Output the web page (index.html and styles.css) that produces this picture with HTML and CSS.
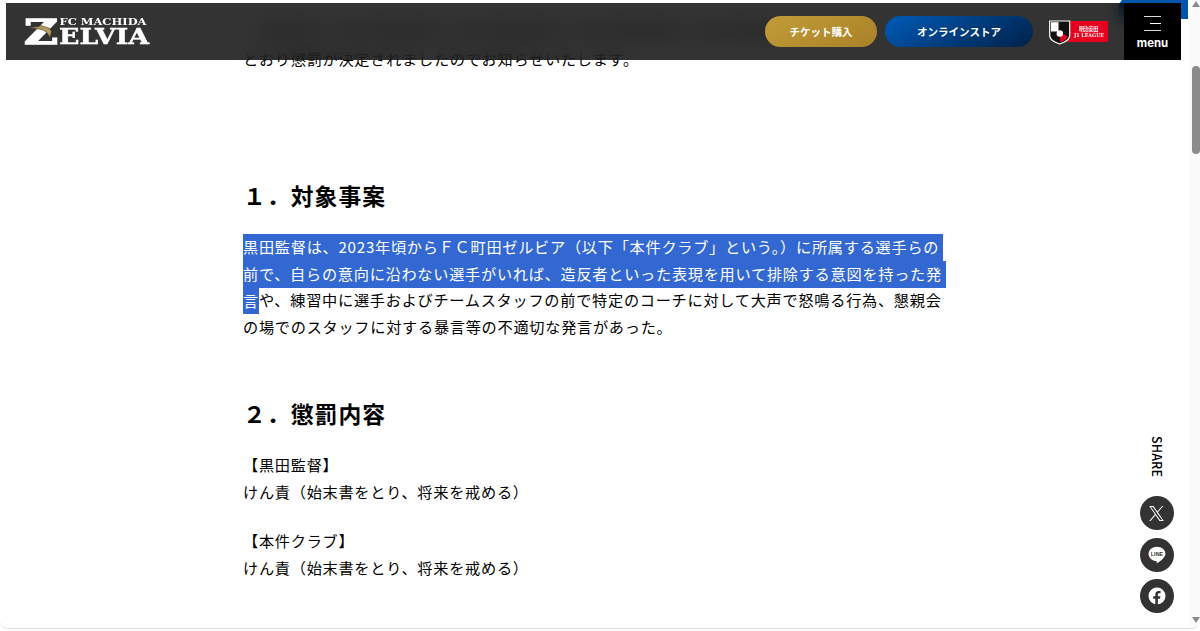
FILE: index.html
```html
<!DOCTYPE html>
<html lang="ja">
<head>
<meta charset="UTF-8">
<meta name="viewport" content="width=device-width, initial-scale=1.0">
<title>FC MACHIDA ZELVIA</title>
<link rel="stylesheet" href="styles.css">
</head>
<body>

<div class="page">

    <div class="corner-banner"></div>

    <main class="article">
        <p class="lead"><span class="lead-above"></span>とおり懲罰が決定されましたのでお知らせいたします。</p>

        <h2>１．対象事案</h2>
        <p><mark class="to-end">黒田監督は、2023年頃からＦＣ町田ゼルビア（以下「本件クラブ」という。）に所属する選手らの</mark><br><mark class="to-end">前で、自らの意向に沿わない選手がいれば、造反者といった表現を用いて排除する意図を持った発</mark><br><mark>言</mark>や、練習中に選手およびチームスタッフの前で特定のコーチに対して大声で怒鳴る行為、懇親会<br>の場でのスタッフに対する暴言等の不適切な発言があった。</p>

        <h2 class="second">２．懲罰内容</h2>
        <p>【黒田監督】<br>けん責（始末書をとり、将来を戒める）</p>
        <p class="spaced">【本件クラブ】<br>けん責（始末書をとり、将来を戒める）</p>
    </main>

    <header class="header">
        <a class="logo" href="#">
            <svg width="128" height="40" viewBox="0 -4 128 40" fill="#fff">
                <g font-family="'DejaVu Serif', serif" font-weight="bold" stroke="#fff">
                    <text x="0" y="28.500" font-size="34" textLength="34" lengthAdjust="spacingAndGlyphs" stroke-width="1.400">Z</text>
                    <text x="35.500" y="10" font-size="9.600" textLength="87" lengthAdjust="spacingAndGlyphs" stroke-width="0">FC MACHIDA</text>
                    <text x="35" y="28.500" font-size="22" textLength="90" lengthAdjust="spacingAndGlyphs" stroke-width=".5">ELVIA</text>
                </g>
                <path d="M4 12.500l10-.8 3-1.200 3.500 1 5 1.700 2 3.200-1.500 6.200-2.800-4.700-4-3-5-1z" fill="#b39a5b" stroke="#333" stroke-width=".5"/>
            </svg>
        </a>
        <nav class="nav">
            <a class="btn ticket" href="#">チケット購入</a>
            <a class="btn store" href="#">オンラインストア</a>
            <svg class="league" width="60" height="26" viewBox="0 0 60 26">
                <path d="M14 2h45v21H14z" fill="#e60020"/>
                <path d="M.7 2h20v14.500c0 4.500-5 6.500-10 8.500-5-2-10-4-10-8.500z" fill="#111" stroke="#fff" stroke-width="1.200"/>
                <path d="M2 3.200h7.500v9.300H2z" fill="#fff"/>
                <path d="M11 13l7.500 4.500c-1 3-4.500 4.500-7.500 5.700z" fill="#e60020"/>
                <circle cx="10.800" cy="14.500" r="3.200" fill="#fff"/>
                <text x="30" y="11.500" font-size="5.200" textLength="19.500">明治安田</text>
                <text x="25" y="18.200" font-size="5" textLength="30" lengthAdjust="spacingAndGlyphs" class="league-sub">J1 LEAGUE</text>
            </svg>
        </nav>
        <button class="menu">
            <span class="menu-lines"><i></i><i></i><i></i></span>
            menu
        </button>
    </header>

    <aside class="share">
        <span class="share-label">SHARE</span>
        <a href="#">
            <svg width="15" height="15" viewBox="0 0 1200 1227" fill="#fff"><path d="M714.163 519.284L1160.890 0H1055.030L667.137 450.887L357.328 0H0L468.492 681.821L0 1226.370H105.866L515.491 750.218L842.672 1226.370H1200L714.137 519.284ZM569.165 687.828L521.697 619.934L144.011 79.694H306.615L611.412 515.685L658.880 583.579L1055.080 1150.300H892.476Z"/></svg>
        </a>
        <a href="#">
            <svg width="18" height="18" viewBox="0 0 18 18">
                <path d="M9 .8c4.700 0 8.400 3 8.400 6.900 0 3.300-4.100 6.800-8 9.300-.9.500-.8-.2-.6-1.800C4 15 .6 11.800.6 7.700.6 3.800 4.300.8 9 .8z" fill="#fff"/>
                <text x="2.800" y="9.800" font-size="5.600" textLength="12.400" lengthAdjust="spacingAndGlyphs" class="line-text">LINE</text>
            </svg>
        </a>
        <a href="#">
            <svg width="18" height="18" viewBox="0 0 18 18">
                <circle cx="9" cy="9" r="8.500" fill="#fff"/>
                <path d="M7.300 18v-6.300H5.200V9.200h2.100V7.400c0-2.300 1.300-3.500 3.300-3.500.8 0 1.600.1 1.900.2v2.100h-1.200c-1.100 0-1.400.6-1.400 1.400v1.600h2.500l-.4 2.500H9.900V18z" fill="#333"/>
            </svg>
        </a>
    </aside>
</div>

<div class="scrollbar">
    <span class="arrow up"></span>
    <span class="thumb"></span>
    <span class="arrow down"></span>
</div>

</body>
</html>
```
FILE: styles.css
```css
* {
    box-sizing: border-box;
}

body {
    position: relative;
    display: flex;
    height: 629px;
    margin: 0;
    overflow: hidden;
    background: #fff;
    border-bottom: 1px solid #ddd;
    border-radius: 0 0 8px 8px;
    color: #000;
    font-family: "Noto Sans CJK JP", sans-serif;
}

a {
    color: inherit;
    text-decoration: none;
}

.page {
    position: relative;
    flex: 1;
}

/* --- Header --- */
.header {
    position: absolute;
    top: 3px;
    left: 6px;
    right: 8px;
    display: flex;
    align-items: center;
    height: 57px;
    padding-left: 18px;
    background: rgba(0, 0, 0, 0.8);
    backdrop-filter: blur(8px);
}

.corner-banner {
    position: absolute;
    top: 0;
    right: 1px;
    width: 69px;
    height: 19px;
    background: #0055ad;
    clip-path: polygon(3px 0, 100% 0, 100% 100%, 0 100%, 0 4px);
}

.logo {
    height: 40px;
    margin-bottom: 1px;
}

.nav {
    display: flex;
    align-items: center;
    gap: 8px;
    margin-left: auto;
}

.btn {
    display: flex;
    align-items: center;
    justify-content: center;
    height: 31px;
    padding-bottom: 1px;
    border-radius: 16px;
    color: #fff;
    font-size: 10.5px;
    font-weight: bold;
}

.ticket {
    width: 112px;
    background: linear-gradient(150deg, #c29c38, #a98128);
}

.store {
    width: 148px;
    background: linear-gradient(150deg, #0055ad 10%, #00244d 95%);
}

.league {
    margin: 0 15px 0 8px;
}

.league text {
    fill: #fff;
    font-weight: bold;
}

.league-sub {
    font-family: "DejaVu Serif", serif;
}

.menu {
    display: flex;
    flex-direction: column;
    align-items: center;
    gap: 3px;
    width: 57px;
    height: 57px;
    padding: 12.5px 0 0;
    border: 0;
    background: #000;
    color: #fff;
    font: bold 11.4px/18px Inter, sans-serif;
}

.menu-lines {
    display: flex;
    flex-direction: column;
    align-items: flex-end;
    gap: 6px;
    width: 17px;
}

.menu-lines i {
    width: 17px;
    height: 1px;
    background: #ddd;
}

.menu-lines i:nth-child(2) {
    width: 11px;
    background: #fff;
}

/* --- Article --- */
.article {
    width: 720px;
    margin-left: 243px;
    padding-top: 45px;
    font-size: 15.2px;
    line-height: 26.7px;
    letter-spacing: 0.72px;
    white-space: nowrap;
}

.article p {
    margin: 0;
}

.lead {
    position: relative;
}

/* part of the previous line, seen only through the blurred header */
.lead-above {
    position: absolute;
    top: -20px;
    left: 16px;
    width: 520px;
    height: 12px;
    background: repeating-linear-gradient(90deg, #777 0 44px, #bbb 56px 80px, #999 95px 120px);
    filter: blur(6px);
    opacity: 0.5;
}

.article h2 {
    margin: 104px 0 17px;
    font-size: 22.8px;
    line-height: 40px;
    font-weight: bold;
    letter-spacing: 1.05px;
}

.article h2.second {
    margin: 54px 0 17.7px;
}

.article .spaced {
    margin-top: 22.5px;
}

mark {
    padding: 0.5px 0 3.5px;
    background: #3367d1;
    color: #fff;
}

/* selected lines run a little past the text and touch the next line */
mark.to-end {
    padding-right: 4px;
    padding-bottom: 5px;
}

/* --- Share buttons --- */
.share {
    position: absolute;
    top: 436px;
    right: 15.5px;
    display: flex;
    flex-direction: column;
    align-items: center;
    gap: 7.5px;
}

.share-label {
    height: 52.5px;
    writing-mode: vertical-rl;
    font: 500 12.6px/18px "Noto Sans CJK JP", sans-serif;
    letter-spacing: 0.1px;
}

.share a {
    display: flex;
    align-items: center;
    justify-content: center;
    width: 34px;
    height: 34px;
    border-radius: 50%;
    background: #333;
}

.line-text {
    fill: #333;
    font-family: "Liberation Sans", sans-serif;
    font-weight: bold;
}

/* --- Scrollbar --- */
.scrollbar {
    display: flex;
    flex-direction: column;
    align-items: flex-end;
    width: 11px;
    padding-bottom: 5px;
    background: #fbfbfb;
}

.thumb {
    width: 8px;
    height: 88px;
    margin-top: 59px;
    border-radius: 4px;
    background: #8b8b8b;
}

.arrow {
    border: solid transparent;
    border-width: 0 4px;
}

.up {
    margin-top: 1px;
    border-bottom: 6px solid #8b8b8b;
}

.down {
    margin-top: auto;
    border-top: 6px solid #8b8b8b;
}
```
